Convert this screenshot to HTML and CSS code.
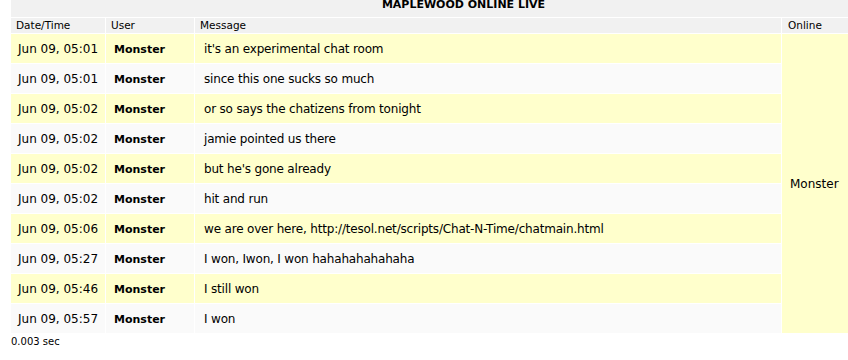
FILE: index.html
```
<!DOCTYPE html>
<html>
<head>
<meta charset="utf-8">
<link rel="stylesheet" href="styles.css">
</head>
<body>
<div class="board">
  <div class="title">MAPLEWOOD ONLINE LIVE</div>
  <div class="head c1">Date/Time</div>
  <div class="head c2">User</div>
  <div class="head c3">Message</div>
  <div class="head c4">Online</div>
  <div class="online">Monster</div>

  <div class="cell c1 odd">Jun 09, 05:01</div><div class="cell c2 odd user">Monster</div><div class="cell c3 odd msg">it's an experimental chat room</div>
  <div class="cell c1 even">Jun 09, 05:01</div><div class="cell c2 even user">Monster</div><div class="cell c3 even msg">since this one sucks so much</div>
  <div class="cell c1 odd">Jun 09, 05:02</div><div class="cell c2 odd user">Monster</div><div class="cell c3 odd msg">or so says the chatizens from tonight</div>
  <div class="cell c1 even">Jun 09, 05:02</div><div class="cell c2 even user">Monster</div><div class="cell c3 even msg">jamie pointed us there</div>
  <div class="cell c1 odd">Jun 09, 05:02</div><div class="cell c2 odd user">Monster</div><div class="cell c3 odd msg">but he's gone already</div>
  <div class="cell c1 even">Jun 09, 05:02</div><div class="cell c2 even user">Monster</div><div class="cell c3 even msg">hit and run</div>
  <div class="cell c1 odd">Jun 09, 05:06</div><div class="cell c2 odd user">Monster</div><div class="cell c3 odd msg">we are over here, http://tesol.net/scripts/Chat-N-Time/chatmain.html</div>
  <div class="cell c1 even">Jun 09, 05:27</div><div class="cell c2 even user">Monster</div><div class="cell c3 even msg">I won, Iwon, I won hahahahahahaha</div>
  <div class="cell c1 odd">Jun 09, 05:46</div><div class="cell c2 odd user">Monster</div><div class="cell c3 odd msg">I still won</div>
  <div class="cell c1 even">Jun 09, 05:57</div><div class="cell c2 even user">Monster</div><div class="cell c3 even msg">I won</div>
</div>
<div class="footer">0.003 sec</div>
</body>
</html>
```

FILE: styles.css
```
html, body {
  margin: 0;
  padding: 0;
  background: #ffffff;
  overflow: hidden;
}
body {
  font-family: "DejaVu Sans", Verdana, sans-serif;
  color: #000000;
}
.board {
  display: grid;
  grid-template-columns: 94px 88px 586px 66px;
  grid-template-rows: 17px 15px repeat(10, 29px);
  gap: 1px;
  margin-left: 11px;
}
.title {
  grid-column: 1 / -1;
  background: #f1f1f1;
  font-weight: bold;
  font-size: 11px;
  line-height: 9px;
  text-align: center;
  padding-left: 68px;
  white-space: nowrap;
}
.head {
  background: #f1f1f1;
  font-size: 10.5px;
  line-height: 15px;
  padding-left: 5px;
  white-space: nowrap;
}
.head.c4 {
  padding-left: 6px;
}
.c1 { grid-column: 1; }
.c2 { grid-column: 2; }
.c3 { grid-column: 3; }
.c4 { grid-column: 4; }
.cell {
  font-size: 12px;
  line-height: 29px;
  padding-top: 1px;
  padding-left: 7px;
  white-space: nowrap;
}
.cell.user {
  font-weight: bold;
  font-size: 11px;
  padding-left: 8px;
}
.cell.msg {
  padding-left: 9px;
  letter-spacing: -0.18px;
}
.odd { background: #ffffcc; }
.even { background: #fafafa; }
.online {
  grid-column: 4;
  grid-row: 3 / span 10;
  background: #ffffcc;
  font-size: 12px;
  display: flex;
  align-items: center;
  padding-left: 8px;
}
.footer {
  margin-left: 11px;
  padding-top: 3px;
  font-size: 10px;
  line-height: 12px;
}
```
